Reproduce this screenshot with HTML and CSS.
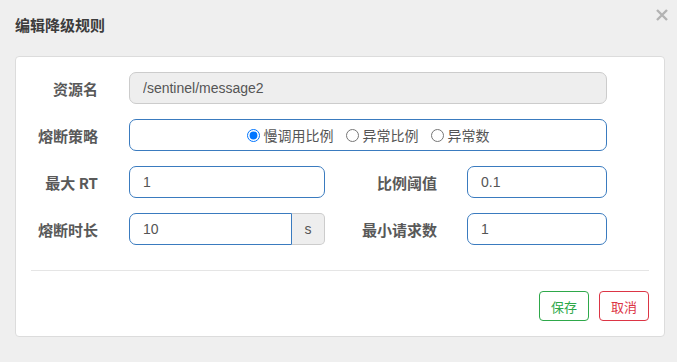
FILE: index.html
```html
<!DOCTYPE html>
<html lang="zh-CN">
<head>
<meta charset="utf-8">
<title>编辑降级规则</title>
<link rel="stylesheet" href="styles.css">
</head>
<body>
<div class="dialog">
  <div class="header">
    <div class="title">编辑降级规则</div>
    <button class="close" aria-label="关闭">
      <svg width="12" height="12" viewBox="0 0 12 12"><path d="M1 1 L11 11 M11 1 L1 11" stroke="#b3b3b3" stroke-width="2.4" stroke-linecap="butt"/></svg>
    </button>
  </div>
  <div class="card">
    <div class="row">
      <label class="lbl">资源名</label>
      <input class="field wide disabled" type="text" value="/sentinel/message2" disabled>
    </div>
    <div class="row">
      <label class="lbl">熔断策略</label>
      <div class="field wide radios">
        <label class="opt"><input type="radio" name="grade" checked>慢调用比例</label>
        <label class="opt"><input type="radio" name="grade">异常比例</label>
        <label class="opt"><input type="radio" name="grade">异常数</label>
      </div>
    </div>
    <div class="row">
      <label class="lbl">最大 RT</label>
      <input class="field mid" type="text" value="1">
      <label class="lbl lbl2">比例阈值</label>
      <input class="field small" type="text" value="0.1">
    </div>
    <div class="row">
      <label class="lbl">熔断时长</label>
      <div class="group">
        <input class="field grp-input" type="text" value="10">
        <span class="addon">s</span>
      </div>
      <label class="lbl lbl2">最小请求数</label>
      <input class="field small" type="text" value="1">
    </div>
    <div class="divider"></div>
    <div class="footer">
      <button class="btn btn-save">保存</button>
      <button class="btn btn-cancel">取消</button>
    </div>
  </div>
</div>
</body>
</html>
```
FILE: styles.css
```css
* { box-sizing: border-box; }
html, body {
  margin: 0;
  padding: 0;
  background: #efefef;
  font-family: "Liberation Sans", "Noto Sans CJK SC", sans-serif;
}
.dialog {
  width: 677px;
  height: 362px;
  padding: 0 12px 0 15px;
}
.header {
  display: flex;
  justify-content: space-between;
  align-items: flex-start;
  height: 56px;
}
.title {
  margin-top: 15px;
  font-family: "Noto Sans CJK SC", sans-serif;
  font-size: 15px;
  line-height: 20px;
  font-weight: bold;
  color: #3c3c3c;
}
.close {
  margin-top: 9px;
  margin-right: -3px;
  padding: 0;
  border: 0;
  background: none;
  width: 12px;
  height: 12px;
  display: flex;
}
.card {
  width: 650px;
  background: #fff;
  border: 1px solid #dcdcdc;
  border-radius: 4px;
  padding: 15px 15px 15px 15px;
}
.row {
  display: flex;
  align-items: center;
  height: 32px;
  margin-bottom: 15px;
}
.row:nth-child(4) { margin-bottom: 0; }
.lbl {
  width: 67px;
  margin-right: 31px;
  text-align: right;
  font-family: "Noto Sans CJK SC", sans-serif;
  font-size: 15px;
  font-weight: bold;
  color: #595959;
  white-space: nowrap;
}
.lbl2 {
  width: 112px;
  margin-right: 30px;
}
.field {
  height: 32px;
  border: 1px solid #3a7bbf;
  border-radius: 7px;
  padding: 0 13px;
  font-family: "Liberation Sans", sans-serif;
  font-size: 14px;
  color: #555;
  background: #fff;
  outline: none;
}
.wide { width: 478px; }
.mid { width: 196px; }
.small { width: 140px; }
.disabled {
  background: #eeeeee;
  border-color: #cccccc;
  color: #555;
}
.radios {
  display: flex;
  align-items: center;
  justify-content: center;
  gap: 12px;
  padding: 0;
}
.opt {
  display: inline-flex;
  align-items: center;
  font-family: "Noto Sans CJK SC", sans-serif;
  font-size: 14px;
  color: #555;
}
.opt input {
  margin: 0 4px 0 0;
  width: 13px;
  height: 13px;
}
.group {
  display: flex;
  width: 196px;
  height: 32px;
}
.grp-input {
  width: 163px;
  border-radius: 7px 0 0 7px;
}
.addon {
  width: 33px;
  height: 32px;
  border: 1px solid #cccccc;
  border-left: 0;
  border-radius: 0 5px 5px 0;
  background: #eeeeee;
  display: flex;
  align-items: center;
  justify-content: center;
  font-size: 14px;
  color: #555;
}
.divider {
  margin-top: 25px;
  height: 1px;
  background: #e5e5e5;
}
.footer {
  margin-top: 20px;
  display: flex;
  justify-content: flex-end;
  gap: 10px;
}
.btn {
  width: 50px;
  height: 30px;
  background: #fff;
  border-radius: 4px;
  font-family: "Noto Sans CJK SC", sans-serif;
  font-size: 13px;
  padding: 0;
}
.btn-save {
  border: 1px solid #2ea84a;
  color: #2ea84a;
}
.btn-cancel {
  border: 1px solid #dc3545;
  color: #dc3545;
}
```
